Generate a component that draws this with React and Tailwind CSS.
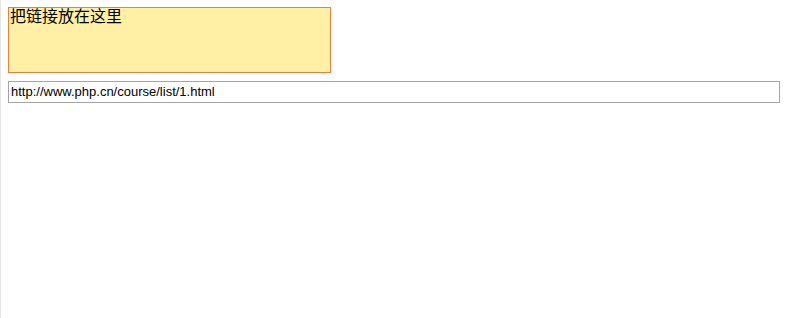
import React from 'react';

export default function App() {
    return (
        <div className="w-[800px] h-[318px] bg-white border-l border-[#e4e4e4] pl-[7px] pt-[7px] font-['Liberation_Sans','Noto_Sans_CJK_SC',sans-serif]">
            {/* drop target */}
            <div className="w-[323px] h-[66px] bg-[#fff0a5] border border-[#e3843f] px-[1px] text-[16px] leading-[18px] text-black">
                把链接放在这里
            </div>

            <div className="mt-[8px] w-[772px] h-[22px] border border-[#a5a5a5] px-[2px] flex items-center text-[13px] text-black">
                http://www.php.cn/course/list/1.html
            </div>
        </div>
    );
}
